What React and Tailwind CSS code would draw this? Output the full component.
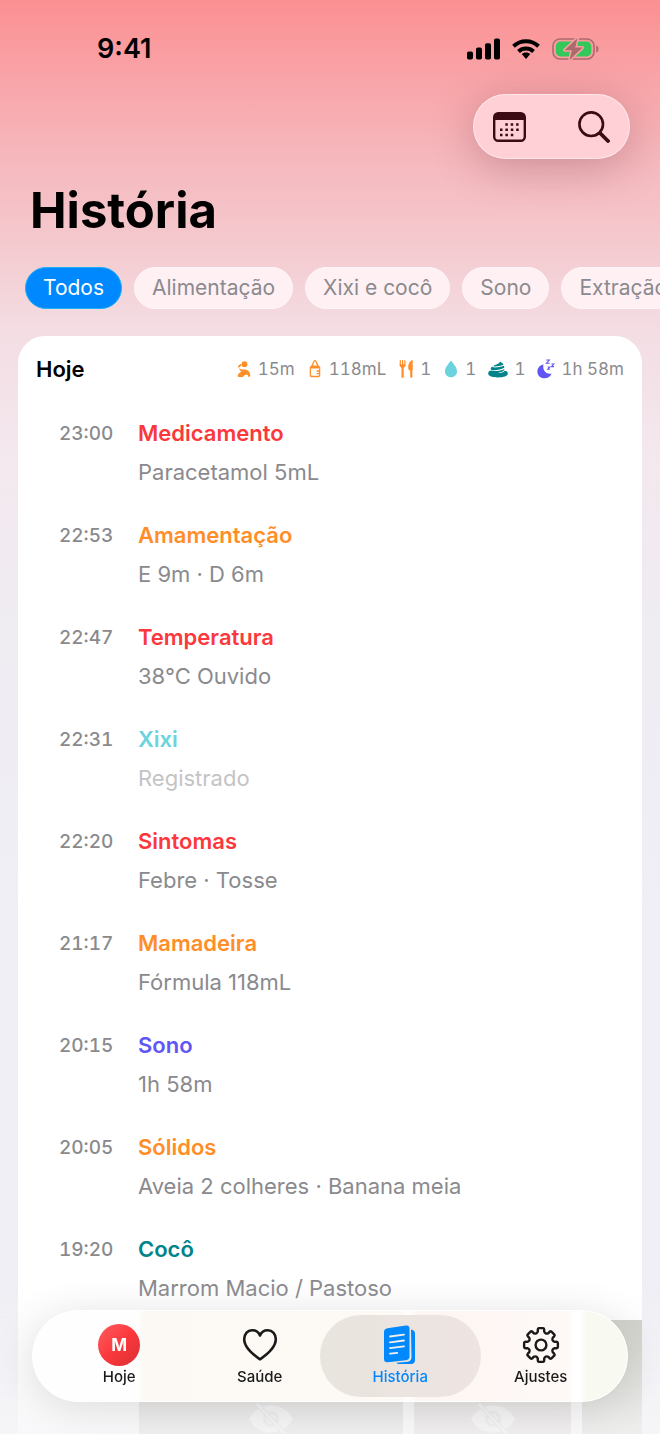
import { useState } from "react";

const filters = ["Todos", "Alimentação", "Xixi e cocô", "Sono", "Extração"];

const entries = [
    { time: "23:00", title: "Medicamento", detail: "Paracetamol 5mL", color: "text-[#fb383c]" },
    { time: "22:53", title: "Amamentação", detail: "E 9m · D 6m", color: "text-[#ff8d28]" },
    { time: "22:47", title: "Temperatura", detail: "38°C Ouvido", color: "text-[#fb383c]" },
    { time: "22:31", title: "Xixi", detail: "Registrado", color: "text-[#6bd3dd]", muted: true },
    { time: "22:20", title: "Sintomas", detail: "Febre · Tosse", color: "text-[#fb383c]" },
    { time: "21:17", title: "Mamadeira", detail: "Fórmula 118mL", color: "text-[#ff8d28]" },
    { time: "20:15", title: "Sono", detail: "1h 58m", color: "text-[#6155f5]" },
    { time: "20:05", title: "Sólidos", detail: "Aveia 2 colheres · Banana meia", color: "text-[#ff8d28]" },
    { time: "19:20", title: "Cocô", detail: "Marrom Macio / Pastoso", color: "text-[#00838a]" },
];

const NursingIcon = () => (
    <svg className="h-5 w-4" viewBox="0 0 16 20" fill="none">
        <circle cx="8.5" cy="5.2" r="2.9" fill="#ff8d28" />
        <path d="M2.800 7.600 4.600 6" stroke="#ff8d28" strokeWidth="1.700" strokeLinecap="round" />
        <path d="M3.400 9.300c1.300 1.200 2.600 1.400 4.800 1.200 3.500-.1 5.700 2 6 5.500.1 1.400-.5 2-1.700 2-.2-2.500-2.700-3.300-4.200-1.500L6.900 18H2.800c-1.100 0-1.400-.8-.9-1.900.7-1.800 1.900-2.800 3.600-3.400-1.400-.8-2.100-1.900-2.100-3.400Z" fill="#ff8d28" />
    </svg>
);

const BottleIcon = () => (
    <svg className="h-5 w-4" viewBox="0 0 16 20" fill="none" stroke="#ff8d28">
        <path d="M4.800 7.500 6.600 3.300c.3-1.100.7-1.600 1.400-1.600s1.100.5 1.400 1.600l1.800 4.200" strokeWidth="1.300" />
        <path d="M2.600 9.600c0-2 1.200-3 2.400-3h6c1.200 0 2.400 1 2.400 3Z" fill="#ff8d28" stroke="none" />
        <path d="M3.400 9.500v6.700c0 .8.500 1.300 1.300 1.300h6.600c.8 0 1.300-.5 1.300-1.300V9.500M9.600 12h3M9.600 14.600h3" strokeWidth="1.300" />
    </svg>
);

const CutleryIcon = () => (
    <svg className="h-5 w-4" viewBox="0 0 16 20" fill="none" stroke="#ff8d28" strokeLinecap="round">
        <path d="M2.300 1.500v5M4.600 1.500v5M6.900 1.500v5" strokeWidth="1.200" />
        <path d="M2.200 6c0 2 1 2.800 2.400 2.800S7 8 7 6Z" fill="#ff8d28" strokeWidth=".8" />
        <path d="M4.600 9v8.800" strokeWidth="2.200" />
        <path d="M13.300 11v6.800" strokeWidth="2.200" />
        <path d="M14 1.500c-2.400 1-3.700 4-3.300 8.300 0 .7.400 1.200 1.200 1.200H14Z" fill="#ff8d28" strokeWidth=".8" strokeLinejoin="round" />
    </svg>
);

const DropIcon = () => (
    <svg className="h-5 w-4" viewBox="0 0 16 20">
        <path d="M8 1.600c2.500 3.400 6 7 6 10.700 0 3.600-2.600 6-6 6s-6-2.400-6-6C2 8.600 5.500 5 8 1.600Z" fill="#6bd3dd" />
    </svg>
);

const PoopIcon = () => (
    <svg className="h-5 w-5" viewBox="0 0 20 20" fill="#00838a">
        <path d="M12.200 2.600c-.6 1.600-1.600 2.200-3.700 2.800-2 .5-2.900 1-2.800 2 3 .3 6.500-.6 9.700-1.600-.3-1.700-1.800-1.700-3.200-3.200Z" />
        <path d="M4.600 7.500C3 8 2.400 9.300 2.900 10.800c4 .9 9.500-.1 13.300-2.100.2-.9-.1-1.400-.5-1.900C12.300 8.100 8.600 8.800 4.600 8.300Z" />
        <path d="M2.700 11.600c-1.700.5-2.500 1.500-2.500 2.900 0 2.500 4 3.900 9.800 3.900s9.800-1.400 9.800-3.900c0-1.800-1.200-2.700-3.100-2.800-1.300 1.900-3.700 2.300-6.700 2.300 1.500-.4 4.500-1.200 5.700-2.500.5-.6.700-1 .7-1.600-3.700 2-8.500 2.800-13.700 1.700Z" />
    </svg>
);

const SleepIcon = () => (
    <svg className="h-5 w-[18px]" viewBox="0 0 18 20" fill="none" stroke="#6155f5">
        <path d="M6.500 5.500C2.700 6.200.4 9 .4 12.400c0 3.900 3 6.900 7 6.900 3.400 0 6.200-1.900 7.200-4.900-5.300 1.500-9.600-3.200-8.100-8.900Z" fill="#6155f5" stroke="none" />
        <path d="M9.300 1h3L9.400 4.200h3.200M14.400 5h2.400l-2.300 2.600h2.500M10.700 8h1.900l-1.800 2.100h2" strokeWidth="1.100" />
    </svg>
);

const summary = [
    { icon: NursingIcon, value: "15m", label: "Amamentação" },
    { icon: BottleIcon, value: "118mL", label: "Mamadeira" },
    { icon: CutleryIcon, value: "1", label: "Sólidos" },
    { icon: DropIcon, value: "1", label: "Xixi" },
    { icon: PoopIcon, value: "1", label: "Cocô" },
    { icon: SleepIcon, value: "1h 58m", label: "Sono" },
];

const AvatarIcon = () => (
    <span className="flex size-[42px] items-center justify-center rounded-full bg-linear-to-br from-[#ff5a5f] via-[#fb383c] to-[#d93034] text-[17px] font-bold text-white">
        M
    </span>
);

const HeartIcon = () => (
    <svg className="size-9" viewBox="0 0 36 36" fill="none" stroke="currentColor" strokeWidth="2.600" strokeLinejoin="round">
        <path d="M18 8.500C16.500 5 13.500 3.300 10.300 3.300 5.400 3.300 2.200 7.100 2.200 12.100c0 7 6.300 13.900 15.800 20.200 9.500-6.300 15.800-13.200 15.800-20.200 0-5-3.200-8.800-8.100-8.800-3.200 0-6.200 1.700-7.700 5.200Z" />
    </svg>
);

const HistoryIcon = () => (
    <svg className="h-10 w-9" viewBox="0 0 36 40" fill="none">
        <path d="M29 4.500c2.500.3 4 1.600 4 4V35c0 2.500-1.500 4-4 4H17.500c-1.500 0-2.500-.3-3-1.200l11-1c2.500-.3 4-2 4-4.300Z" fill="#0088ff" />
        <path d="M5.500 3.200c-2.200.3-3.500 1.700-3.500 3.800v27c0 2.200 1.300 3.500 3.500 3.300l18.500-2c2.200-.3 3.500-1.700 3.500-3.800V3.500c0-2.200-1.300-3.200-3.500-2.900Z" fill="#0088ff" />
        <path d="m8 11.500 14-1.800M8 17.300l14-1.800M8 23.100l14-1.800M8 28.700l7.300-.9" stroke="#f3f0ee" strokeWidth="1.800" strokeLinecap="round" />
    </svg>
);

const gearPoint = (radius, degrees) => {
    const a = (degrees * Math.PI) / 180;
    return `${(19 + radius * Math.sin(a)).toFixed(2)} ${(19 - radius * Math.cos(a)).toFixed(2)}`;
};

const gearPath =
    Array.from({ length: 8 }, (_, i) => {
        const a = i * 45;
        return `${i ? "L" : "M"}${gearPoint(15.6, a - 12)}Q${gearPoint(17, a - 11)} ${gearPoint(17, a - 7)}L${gearPoint(17, a + 7)}Q${gearPoint(17, a + 11)} ${gearPoint(15.6, a + 12)}L${gearPoint(14, a + 13)}Q${gearPoint(11.2, a + 22.5)} ${gearPoint(14, a + 32)}`;
    }).join("") + "Z";

const GearIcon = () => (
    <svg className="size-[38px]" viewBox="0 0 38 38" fill="none" stroke="currentColor" strokeWidth="2.400" strokeLinejoin="round">
        <path d={gearPath} />
        <circle cx="19" cy="19" r="5.400" />
    </svg>
);

const tabs = [
    { name: "Hoje", icon: AvatarIcon },
    { name: "Saúde", icon: HeartIcon },
    { name: "História", icon: HistoryIcon },
    { name: "Ajustes", icon: GearIcon },
];

const HiddenPhoto = ({ className, showIcon }) => (
    <div className={`flex h-[198px] items-center justify-center ${className}`}>
        {showIcon && (
            <svg className="h-8 w-11" viewBox="0 0 44 32" fill="none">
                <path d="M0 16C5 7 13 2.500 22 2.500S39 7 44 16c-5 9-13 13.500-22 13.500S5 25 0 16Z" fill="#f0efee" />
                <circle cx="22" cy="16" r="6.500" stroke="#d8d7d4" strokeWidth="3" />
                <path d="m10 3 25 27" stroke="#d5d3d0" strokeWidth="5" />
                <path d="m8 1 27 29" stroke="#f0efee" strokeWidth="2.500" />
            </svg>
        )}
    </div>
);

const StatusBar = () => (
    <div className="flex h-[94px] shrink-0 items-center justify-between pt-1 pr-[61px] pl-[97px]">
        <span className="text-[27px] leading-8 font-semibold">9:41</span>
        <div className="flex items-center gap-3">
            <svg className="h-[22px] w-[33px]" viewBox="0 0 33 22">
                <rect x="0" y="13.500" width="6" height="8" rx="1.800" />
                <rect x="9" y="9.500" width="6" height="12" rx="1.800" />
                <rect x="18" y="5.200" width="6" height="16.300" rx="1.800" />
                <rect x="27" y=".5" width="6" height="21" rx="1.800" />
            </svg>
            <svg className="h-[22px] w-7" viewBox="0 0 28 22" fill="none" stroke="#000" strokeWidth="4">
                <path d="M1.500 8.300a18 18 0 0 1 25 0" />
                <path d="M6.500 13.500a11 11 0 0 1 15 0" />
                <path d="M14 14.500c-1.800 0-3.300.6-4.300 1.600L14 21l4.300-4.900c-1-1-2.500-1.600-4.300-1.600Z" fill="#000" stroke="none" />
            </svg>
            <svg className="h-6 w-[47px]" viewBox="0 0 47 24" fill="none">
                <rect x="1" y="2" width="41" height="20" rx="7" stroke="#ad6a6d" strokeWidth="1.600" />
                <path d="M44.200 8.500c1.500.6 2.300 1.700 2.300 3.500s-.8 2.900-2.300 3.500Z" fill="#ad6a6d" />
                <rect x="3.800" y="4.600" width="35.500" height="14.800" rx="4.500" fill="#34c759" />
                <path d="M25.500 1 12.500 13.200h7.300L17.600 23l13-12.400h-7.300Z" fill="#ad6a6d" stroke="#f99fa2" strokeWidth="3" strokeLinejoin="round" paintOrder="stroke" />
            </svg>
        </div>
    </div>
);

const EntryRow = ({ entry }) => (
    <li className="flex h-[102px] gap-6 pt-4 pl-[41px]">
        <time className="w-[55px] shrink-0 text-[19px] leading-8 font-medium text-[#8a8a8e] tabular-nums">{entry.time}</time>
        <div>
            <h3 className={`text-[22px] leading-[30px] font-semibold ${entry.color}`}>{entry.title}</h3>
            <p className={`mt-[9px] text-[22px] leading-[30px] ${entry.muted ? "text-[#c4c4c6]" : "text-[#8a8a8e]"}`}>
                {entry.detail}
            </p>
        </div>
    </li>
);

const App = () => {
    const [filter, setFilter] = useState("Todos");
    const [tab, setTab] = useState("História");

    return (
        <div className="flex h-screen flex-col overflow-hidden bg-[#efeff5] bg-[linear-gradient(to_bottom,#fb9092_0px,#f9a2a6_70px,#f6b6bb_150px,#f4cbd0_250px,#f3dde3_330px,#f3e8ee_450px,#efecf2_620px,#efeff5_900px)] font-[Inter,'Liberation_Sans',sans-serif] text-black">
            <StatusBar />

            <header className="shrink-0">
                <div className="flex justify-end pr-[30px]">
                    <div className="flex h-[65px] w-[157px] items-center justify-between rounded-full border border-white/50 bg-[#ffd0d6] px-[19px] text-[#3b0a12] shadow-[0_8px_44px_rgba(80,20,30,0.26)]">
                        <button type="button" aria-label="Calendário">
                            <svg className="h-[30px] w-[33px]" viewBox="0 0 33 30" fill="none">
                                <rect x="1.200" y="1.200" width="30.600" height="27.600" rx="4" stroke="currentColor" strokeWidth="2.400" />
                                <path d="M1 8V4.500C1 2.500 2.500 1 4.500 1h24C30.500 1 32 2.500 32 4.500V8Z" fill="currentColor" />
                                <path d="M12.300 12.500h13.500M7 17.800h18.800M7 23h13.500" stroke="currentColor" strokeWidth="2.500" strokeDasharray="2.500 2.900" />
                            </svg>
                        </button>
                        <button type="button" aria-label="Buscar">
                            <svg className="size-8" viewBox="0 0 32 32" fill="none" stroke="currentColor" strokeLinecap="round">
                                <circle cx="13.200" cy="13.200" r="11.800" strokeWidth="2.600" />
                                <path d="m22.500 22.500 7.500 7.500" strokeWidth="3.800" />
                            </svg>
                        </button>
                    </div>
                </div>
                <h1 className="mt-5 pl-[30px] text-[49px] leading-[64px] font-bold">História</h1>
                <div className="mt-6 flex gap-3 overflow-x-auto pl-[25px] [scrollbar-width:none]">
                    {filters.map((name) => (
                        <button
                            key={name}
                            type="button"
                            onClick={() => setFilter(name)}
                            className={`h-[42px] shrink-0 rounded-full border px-[17px] text-[21px] leading-7 ${
                                filter === name
                                    ? "border-[#1fb0f8] bg-[#0088ff] text-white"
                                    : "border-[#fff5f8] bg-[#fff0f4] text-[#8a8a8e]"
                            }`}
                        >
                            {name}
                        </button>
                    ))}
                </div>
            </header>

            <main className="mx-[18px] mt-[27px] flex-1 overflow-hidden rounded-t-[27px] bg-white">
                <div className="flex h-[66px] items-center justify-between px-[18px]">
                    <h2 className="text-[22px] leading-[30px] font-semibold">Hoje</h2>
                    <ul className="flex items-center gap-3 text-[17px] leading-6 text-[#8a8a8e] tabular-nums">
                        {summary.map((item) => (
                            <li key={item.label} title={item.label} className="flex items-center gap-[6px]">
                                <item.icon />
                                {item.value}
                            </li>
                        ))}
                    </ul>
                </div>
                <ul>
                    {entries.map((entry) => (
                        <EntryRow key={entry.time} entry={entry} />
                    ))}
                </ul>
                <div className="flex gap-[11px] pl-[121px]">
                    <HiddenPhoto className="w-[264px] shrink-0 bg-[#d3d0cc]" showIcon />
                    <HiddenPhoto className="w-[157px] shrink-0 bg-[#d5cdca]" showIcon />
                    <HiddenPhoto className="flex-1 bg-[#c9cac0]" />
                </div>
            </main>

            <div className="pointer-events-none fixed inset-x-0 bottom-0 h-[150px] bg-linear-to-b from-[#f7f7f9]/0 to-[#f7f7f9]/80" />

            <nav className="fixed inset-x-8 bottom-8 flex h-[92px] rounded-full border border-white bg-white bg-[linear-gradient(to_right,#fefefe_105px,#fcf9f4_110px,#fdf9f5_368px,#fffdfc_373px,#fffdfc_379px,#fdf6f3_384px,#fef8f6_535px,#ffffff_541px,#ffffff_547px,#f8faf2_553px)] px-4 py-1 shadow-[0_6px_40px_rgba(0,0,0,0.12)]">
                {tabs.map((item) => (
                    <button
                        key={item.name}
                        type="button"
                        onClick={() => setTab(item.name)}
                        aria-current={tab === item.name ? "page" : undefined}
                        className={`relative flex flex-1 flex-col items-center pt-[9px] text-[15px] leading-5 ${
                            tab === item.name ? "text-[#0088ff]" : "text-[#1a1a1a]"
                        }`}
                    >
                        {tab === item.name && (
                            <span className="absolute -inset-x-[10px] inset-y-0 rounded-full bg-linear-to-r from-[#e8e4de] to-[#eee4e1]" />
                        )}
                        <span className="relative flex h-[42px] items-center">
                            <item.icon />
                        </span>
                        <span className="relative mt-px font-medium">{item.name}</span>
                    </button>
                ))}
            </nav>
        </div>
    );
};

export default App;
